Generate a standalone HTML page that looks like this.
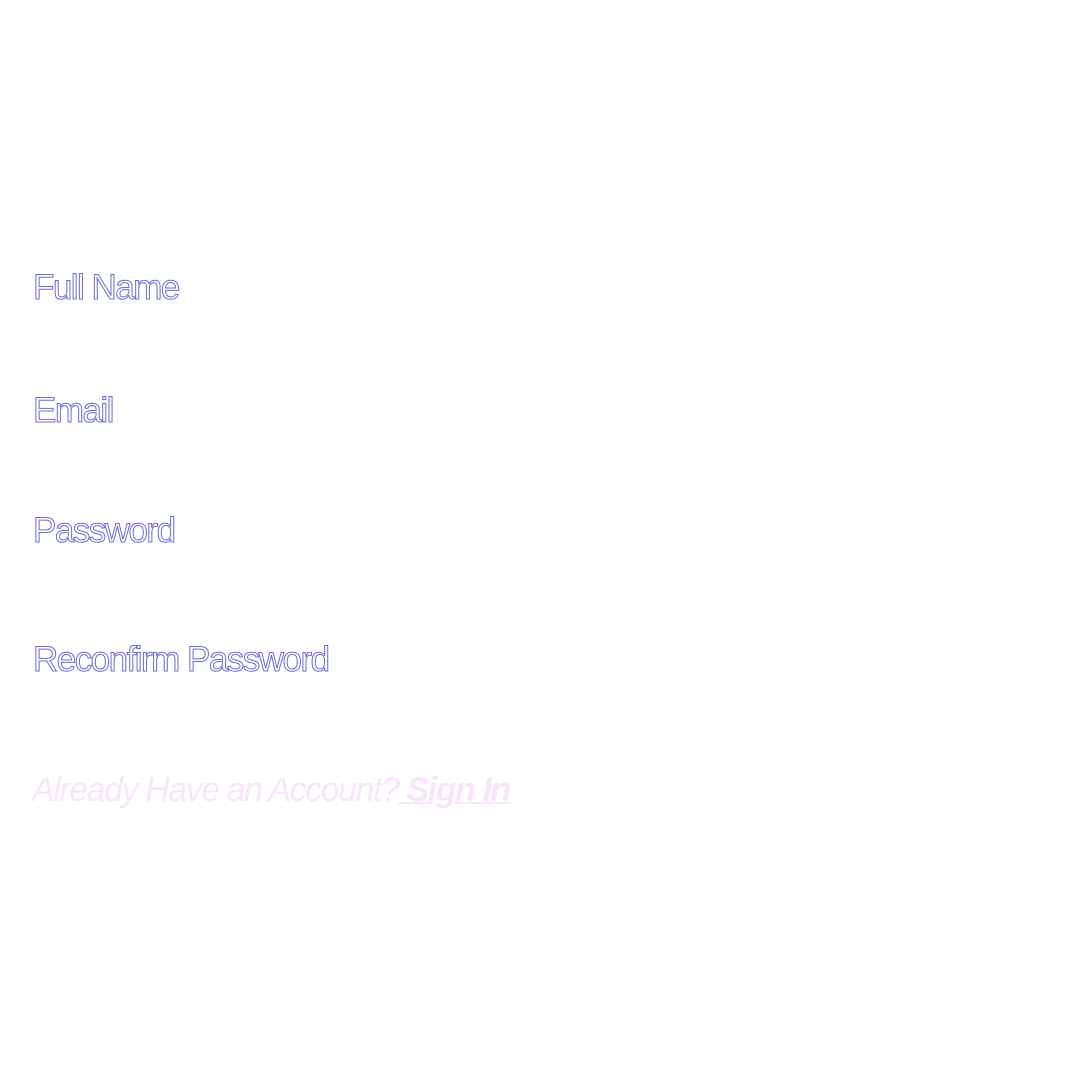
<!DOCTYPE html>
<html><head><meta charset="utf-8"><style>
html,body{margin:0;padding:0;background:#fff;width:1080px;height:1080px;overflow:hidden;}
.t{position:absolute;left:33px;font-family:"Liberation Sans",sans-serif;font-size:35px;line-height:34px;letter-spacing:-1.52px;color:#fff;-webkit-text-stroke:1px #6b6bd4;white-space:nowrap;}
.b{position:absolute;left:32px;top:773px;font-family:"Liberation Sans",sans-serif;font-size:34px;line-height:34px;letter-spacing:-1.45px;font-style:italic;color:#f8e4fb;white-space:nowrap;}
.b b{text-decoration:underline;text-decoration-thickness:2px;}
</style></head><body>
<div class="t" style="top:271px">Full Name</div>
<div class="t" style="top:394px">Email</div>
<div class="t" style="top:514px">Password</div>
<div class="t" style="top:643px">Reconfirm Password</div>
<div class="b">Already Have an Account?<b> Sign In</b></div>
</body></html>
